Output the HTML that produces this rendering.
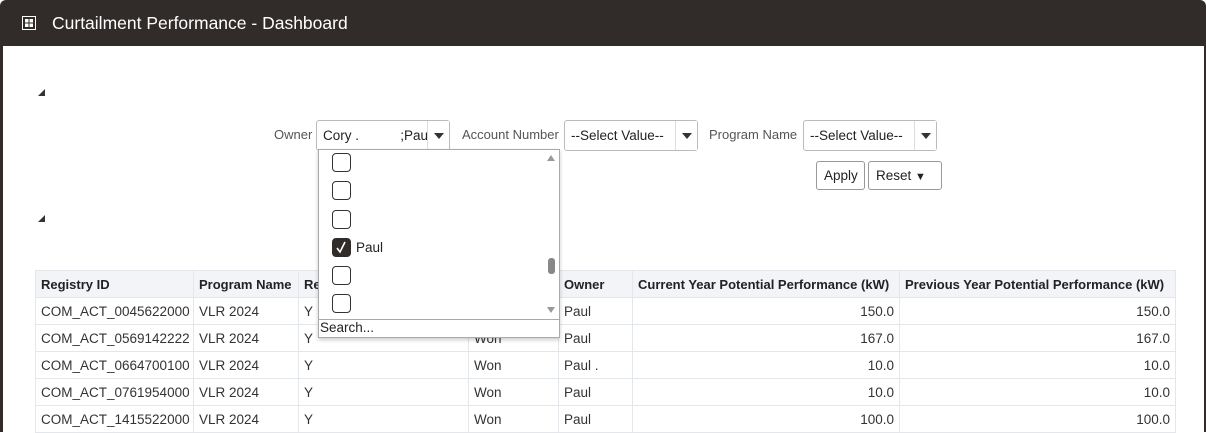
<!DOCTYPE html>
<html><head><style>
*{box-sizing:border-box;margin:0;padding:0}
body{width:1206px;height:432px;overflow:hidden;background:#fff;font-family:"Liberation Sans",sans-serif;font-size:13.5px;color:#333;position:relative}
.hdr{position:absolute;left:0;top:0;width:1206px;height:46px;background:#312c2a;border-radius:6px 6px 0 0}
.hdr .t{position:absolute;left:52px;top:13px;color:#fff;font-size:17.5px}
.side{position:absolute;left:0;top:46px;width:3px;height:386px;background:#312c2a}
.side2{position:absolute;right:0;top:46px;width:2px;height:386px;background:#312c2a}
.tri{position:absolute;width:0;height:0;border-left:7px solid transparent;border-bottom:7px solid #333}
.lbl{position:absolute;color:#555;font-size:13px}
.sel{position:absolute;height:31px;border:1px solid #bbb;border-radius:3px;background:#fff}
.sel .v{position:absolute;left:6px;top:7px;color:#222;font-size:13.5px;white-space:nowrap}
.sel .a{position:absolute;right:0;top:0;width:22px;height:29px;border-left:1px solid #ddd;background:#fff}
.sel .a:after{content:"";position:absolute;left:6px;top:12px;border-left:5px solid transparent;border-right:5px solid transparent;border-top:6px solid #333}
.btn{position:absolute;top:161px;height:29px;border:1px solid #999;border-radius:3px;background:#fff;font-size:13.5px;color:#222;padding:6px 7px;white-space:nowrap}
table{position:absolute;left:35px;top:270px;width:1140px;table-layout:fixed;border-collapse:collapse;font-size:13.5px}
td,th{height:27px;border:1px solid #e3e6ea;padding:0 5px;text-align:left;white-space:nowrap;overflow:hidden;color:#333}
th{background:#f2f4f8;font-weight:bold;color:#222;font-size:13px}
td.n{text-align:right}
.dd{position:absolute;left:318px;top:149px;width:242px;height:189px;background:#fff;border:1px solid #aaa;box-shadow:0 2px 4px rgba(0,0,0,.2)}
.cb{position:absolute;left:13px;width:19px;height:19px;border:1.5px solid #333;border-radius:4px;background:#fff}
.srch{position:absolute;left:0;top:169px;width:240px;height:19px;border-top:1px solid #aaa;font-size:13.5px;color:#222;padding-left:1px}
</style></head><body>
<div class="hdr">
<svg style="position:absolute;left:22px;top:16px" width="14" height="14" viewBox="0 0 14 14"><rect x="0.5" y="0.5" width="13" height="13" fill="none" stroke="#fff"/><rect x="3" y="3" width="3.5" height="3.5" fill="#fff"/><rect x="7.5" y="3" width="3.5" height="3.5" fill="#fff"/><rect x="3" y="7.5" width="3.5" height="3.5" fill="#fff"/><rect x="7.5" y="7.5" width="3.5" height="3.5" fill="#fff"/></svg>
<div class="t">Curtailment Performance - Dashboard</div></div>
<div class="side"></div><div class="side2"></div>
<div class="tri" style="left:38px;top:89px"></div>
<div class="tri" style="left:38px;top:215px"></div>
<div class="lbl" style="left:274px;top:127px">Owner</div>
<div class="sel" style="left:316px;top:120px;width:134px"><div class="v">Cory .&nbsp;&nbsp;&nbsp;&nbsp;&nbsp;&nbsp;&nbsp;&nbsp;&nbsp;&nbsp;&nbsp;;Paul</div><div class="a"></div></div>
<div class="lbl" style="left:462px;top:127px">Account Number</div>
<div class="sel" style="left:564px;top:120px;width:134px"><div class="v">--Select Value--</div><div class="a"></div></div>
<div class="lbl" style="left:709px;top:127px">Program Name</div>
<div class="sel" style="left:803px;top:120px;width:134px"><div class="v">--Select Value--</div><div class="a"></div></div>
<div class="btn" style="left:816px;width:49px">Apply</div>
<div class="btn" style="left:868px;width:74px">Reset <span style="font-size:11px">&#9660;</span></div>
<table>
<colgroup><col style="width:158px"><col style="width:105px"><col style="width:170px"><col style="width:90px"><col style="width:74px"><col style="width:267px"><col style="width:276px"></colgroup>
<tr><th>Registry ID</th><th>Program Name</th><th>Re</th><th></th><th>Owner</th><th>Current Year Potential Performance (kW)</th><th>Previous Year Potential Performance (kW)</th></tr>
<tr><td>COM_ACT_0045622000</td><td>VLR 2024</td><td>Y</td><td></td><td>Paul</td><td class="n">150.0</td><td class="n">150.0</td></tr>
<tr><td>COM_ACT_0569142222</td><td>VLR 2024</td><td>Y</td><td>Won</td><td>Paul</td><td class="n">167.0</td><td class="n">167.0</td></tr>
<tr><td>COM_ACT_0664700100</td><td>VLR 2024</td><td>Y</td><td>Won</td><td>Paul .</td><td class="n">10.0</td><td class="n">10.0</td></tr>
<tr><td>COM_ACT_0761954000</td><td>VLR 2024</td><td>Y</td><td>Won</td><td>Paul</td><td class="n">10.0</td><td class="n">10.0</td></tr>
<tr><td>COM_ACT_1415522000</td><td>VLR 2024</td><td>Y</td><td>Won</td><td>Paul</td><td class="n">100.0</td><td class="n">100.0</td></tr>
</table>
<div class="dd">
<div class="cb" style="top:3px"></div>
<div class="cb" style="top:31px"></div>
<div class="cb" style="top:60px"></div>
<div class="cb" style="top:88px;background:#312c2a;border-color:#312c2a"><svg width="16" height="16" viewBox="0 0 16 16" style="position:absolute;left:0;top:0"><path d="M4 9 L7 13 L12 3" fill="none" stroke="#fff" stroke-width="1.6"/></svg></div>
<div style="position:absolute;left:37px;top:90px;font-size:13.5px;color:#222">Paul</div>
<div class="cb" style="top:116px"></div>
<div class="cb" style="top:144px"></div>
<div style="position:absolute;left:228px;top:5px;border-left:4px solid transparent;border-right:4px solid transparent;border-bottom:6px solid #999"></div>
<div style="position:absolute;left:229px;top:108px;width:7px;height:16px;border-radius:3px;background:#888"></div>
<div style="position:absolute;left:228px;top:157px;border-left:4px solid transparent;border-right:4px solid transparent;border-top:6px solid #999"></div>
<div class="srch">Search...</div>
</div>
</body></html>
